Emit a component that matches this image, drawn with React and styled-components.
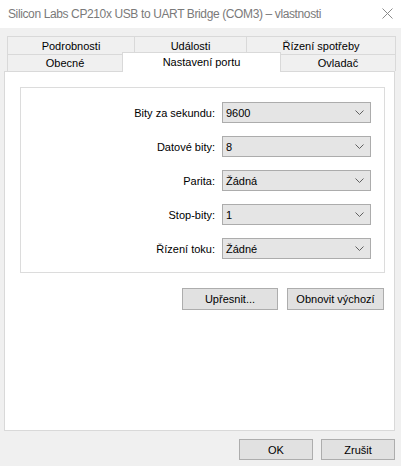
import React from 'react';
import styled, { createGlobalStyle } from 'styled-components';

const GlobalStyle = createGlobalStyle`
  html, body { margin: 0; padding: 0; background: #f0f0f0; }
  body { font-family: "Liberation Sans", Arial, sans-serif; font-size: 11px; color: #000; }
  * { box-sizing: border-box; }
`;

const Window = styled.div`
  width: 401px;
  height: 466px;
  display: flex;
  flex-direction: column;
  background: #f0f0f0;
  overflow: hidden;
`;

const TitleBar = styled.div`
  height: 28px;
  flex: none;
  background: #fff;
  display: flex;
  align-items: center;
  justify-content: space-between;
  padding: 0 8px 1px 8px;
`;

const Title = styled.div`
  font-size: 12px;
  color: #7a7a7a;
  letter-spacing: -0.38px;
`;

const Body = styled.div`
  flex: 1;
  display: flex;
  flex-direction: column;
  padding: 8px 6px 0 4px;
`;

const TabRow = styled.div`
  display: grid;
  grid-template-columns: ${p => p.cols};
  margin-left: 3px;
  width: 387px;
  height: ${p => p.h}px;
`;

const Tab = styled.div`
  position: relative;
  display: flex;
  align-items: center;
  justify-content: center;
  border: 1px solid #d9d9d9;
  border-bottom: none;
  margin-left: -1px;
  background: #f0f0f0;
  white-space: nowrap;
  &:first-child { margin-left: 0; }
`;

/* the open tab sits slightly higher and joins the page below it */
const ActiveTab = styled(Tab)`
  z-index: 2;
  background: #fff;
  margin-top: -2px;
  margin-bottom: -1px;
  padding-bottom: 2px;
`;

const Page = styled.div`
  width: 391px;
  height: 360px;
  background: #fff;
  border: 1px solid #d9d9d9;
  padding: 15px 0 0 15px;
`;

const Group = styled.div`
  width: 365px;
  height: 186px;
  border: 1px solid #dcdcdc;
  padding: 14px 13px 0 0;
  display: flex;
  flex-direction: column;
  gap: 13px;
`;

const Field = styled.div`
  display: flex;
  align-items: center;
  justify-content: flex-end;
  gap: 7px;
  height: 21px;
`;

const Label = styled.span`
  white-space: nowrap;
`;

const Combo = styled.div`
  width: 149px;
  height: 21px;
  background: #e5e5e5;
  border: 1px solid #acacac;
  display: flex;
  align-items: center;
  justify-content: space-between;
  padding: 0 6px 0 3px;
`;

const Actions = styled.div`
  display: flex;
  justify-content: flex-end;
  gap: 9px;
  width: 364px;
  margin-top: 15px;
`;

const Button = styled.div`
  width: ${p => p.w}px;
  height: ${p => p.h || 22}px;
  background: #e1e1e1;
  border: 1px solid #adadad;
  display: flex;
  align-items: center;
  justify-content: center;
  white-space: nowrap;
`;

const Footer = styled.div`
  display: flex;
  justify-content: flex-end;
  gap: 8px;
  margin-top: 8px;
`;

const Chevron = () => (
  <svg width="9" height="5" viewBox="0 0 9 5">
    <path d="M0.5 0.5 L4.5 4.5 L8.5 0.5" fill="none" stroke="#606060" strokeWidth="1" />
  </svg>
);

const CloseIcon = () => (
  <svg width="11" height="11" viewBox="0 0 11 11">
    <path d="M0.5 0.5 L10.5 10.5 M10.5 0.5 L0.5 10.5" stroke="#8a8a8a" strokeWidth="1" />
  </svg>
);

const fields = [
  ['Bity za sekundu:', '9600'],
  ['Datové bity:', '8'],
  ['Parita:', 'Žádná'],
  ['Stop-bity:', '1'],
  ['Řízení toku:', 'Žádné'],
];

export default function App() {
  return (
    <>
      <GlobalStyle />
      <Window>
        <TitleBar>
          <Title>Silicon Labs CP210x USB to UART Bridge (COM3) – vlastnosti</Title>
          <CloseIcon />
        </TitleBar>
        <Body>
          <TabRow cols="128px 112px 149px" h={18}>
            <Tab>Podrobnosti</Tab>
            <Tab>Události</Tab>
            <Tab>Řízení spotřeby</Tab>
          </TabRow>
          <TabRow cols="116px 158px 115px" h={17}>
            <Tab>Obecné</Tab>
            <ActiveTab>Nastavení portu</ActiveTab>
            <Tab>Ovladač</Tab>
          </TabRow>
          <Page>
            <Group>
              {fields.map(([label, value]) => (
                <Field key={label}>
                  <Label>{label}</Label>
                  <Combo>
                    <span>{value}</span>
                    <Chevron />
                  </Combo>
                </Field>
              ))}
            </Group>
            <Actions>
              <Button w={96}>Upřesnit...</Button>
              <Button w={97}>Obnovit výchozí</Button>
            </Actions>
          </Page>
          <Footer>
            <Button w={74} h={21}>OK</Button>
            <Button w={74} h={21}>Zrušit</Button>
          </Footer>
        </Body>
      </Window>
    </>
  );
}
